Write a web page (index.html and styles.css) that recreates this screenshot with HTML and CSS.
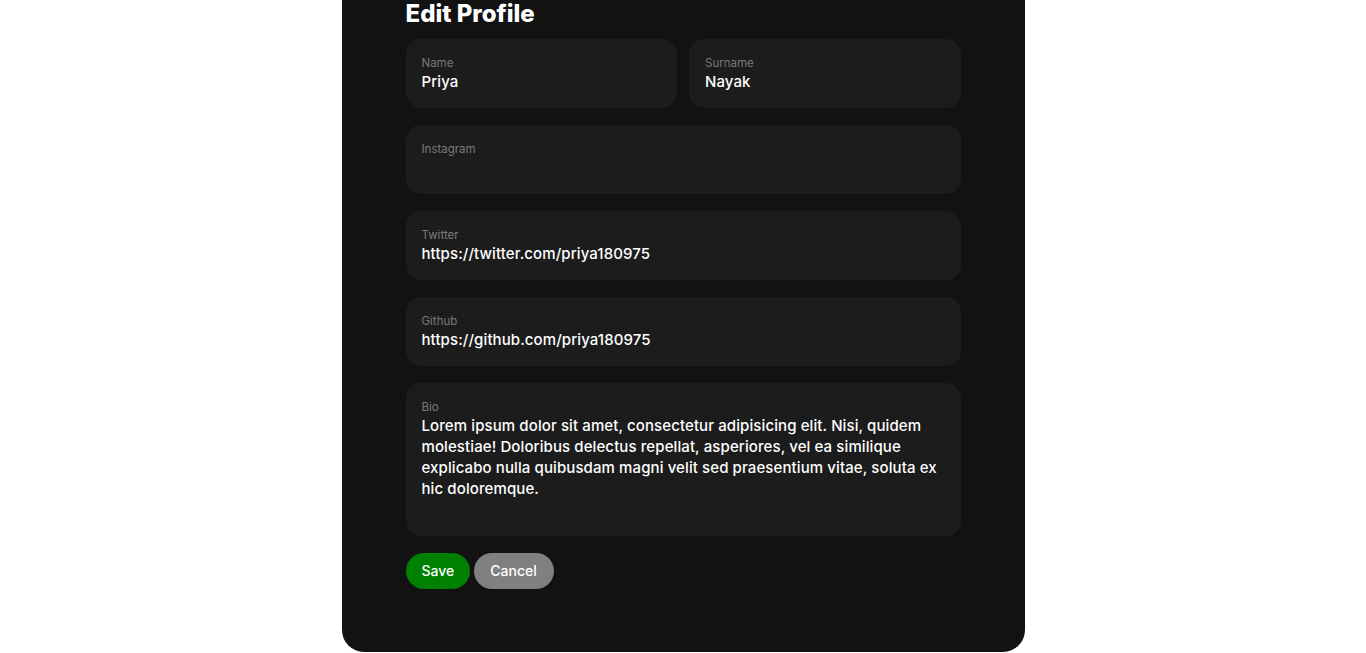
FILE: index.html
```html
<!DOCTYPE html>
<html lang="en">
<head>
<meta charset="utf-8">
<title>Edit Profile</title>
<link rel="stylesheet" href="styles.css">
</head>
<body>
<main class="card">
  <h1 class="title">Edit Profile</h1>
  <form class="form">
    <div class="row">
      <label class="field">
        <span class="label">Name</span>
        <span class="value">Priya</span>
      </label>
      <label class="field">
        <span class="label">Surname</span>
        <span class="value">Nayak</span>
      </label>
    </div>
    <label class="field">
      <span class="label">Instagram</span>
      <span class="value"></span>
    </label>
    <label class="field">
      <span class="label">Twitter</span>
      <span class="value">https://twitter.com/priya180975</span>
    </label>
    <label class="field">
      <span class="label">Github</span>
      <span class="value">https://github.com/priya180975</span>
    </label>
    <label class="field">
      <span class="label">Bio</span>
      <span class="value bio">Lorem ipsum dolor sit amet, consectetur adipisicing elit. Nisi, quidem molestiae! Doloribus delectus repellat, asperiores, vel ea similique explicabo nulla quibusdam magni velit sed praesentium vitae, soluta ex hic doloremque.</span>
    </label>
    <div class="actions">
      <button type="button" class="btn save">Save</button>
      <button type="button" class="btn cancel">Cancel</button>
    </div>
  </form>
</main>
</body>
</html>
```
FILE: styles.css
```css
* { box-sizing: border-box; }
html, body { margin: 0; background: #ffffff; }
body {
  font-family: Inter, "Open Sans", sans-serif;
  color: #ffffff;
}
.card {
  width: 683px;
  margin: 0 auto;
  background: #121212;
  border-radius: 0 0 22px 22px;
  padding: 0 64px 63px;
}
.title {
  margin: 0;
  font-size: 24px;
  line-height: 28px;
  font-weight: 800;
  padding-bottom: 11px;
}
.form {
  display: flex;
  flex-direction: column;
  gap: 17px;
}
.row {
  display: flex;
  gap: 12px;
}
.row .field { flex: 1; }
.field {
  display: flex;
  flex-direction: column;
  background: #1c1c1c;
  border-radius: 15px;
  padding: 16px 16px 16px;
  min-height: 69px;
}
.label {
  font-size: 11.5px;
  line-height: 16px;
  color: #7a7a7a;
}
.value {
  font-size: 15px;
  line-height: 21px;
  min-height: 21px;
  font-weight: 500;
  letter-spacing: 0.1px;
  color: #ffffff;
}
.bio { min-height: 105px; }
.actions {
  display: flex;
  gap: 4px;
}
.btn {
  font-family: inherit;
  font-size: 14px;
  font-weight: 500;
  color: #ffffff;
  border: 0;
  height: 36px;
  border-radius: 18px;
  padding: 0 16px 2px;
}
.save { background: #008000; width: 64px; }
.cancel { background: #808080; width: 80px; }
```
